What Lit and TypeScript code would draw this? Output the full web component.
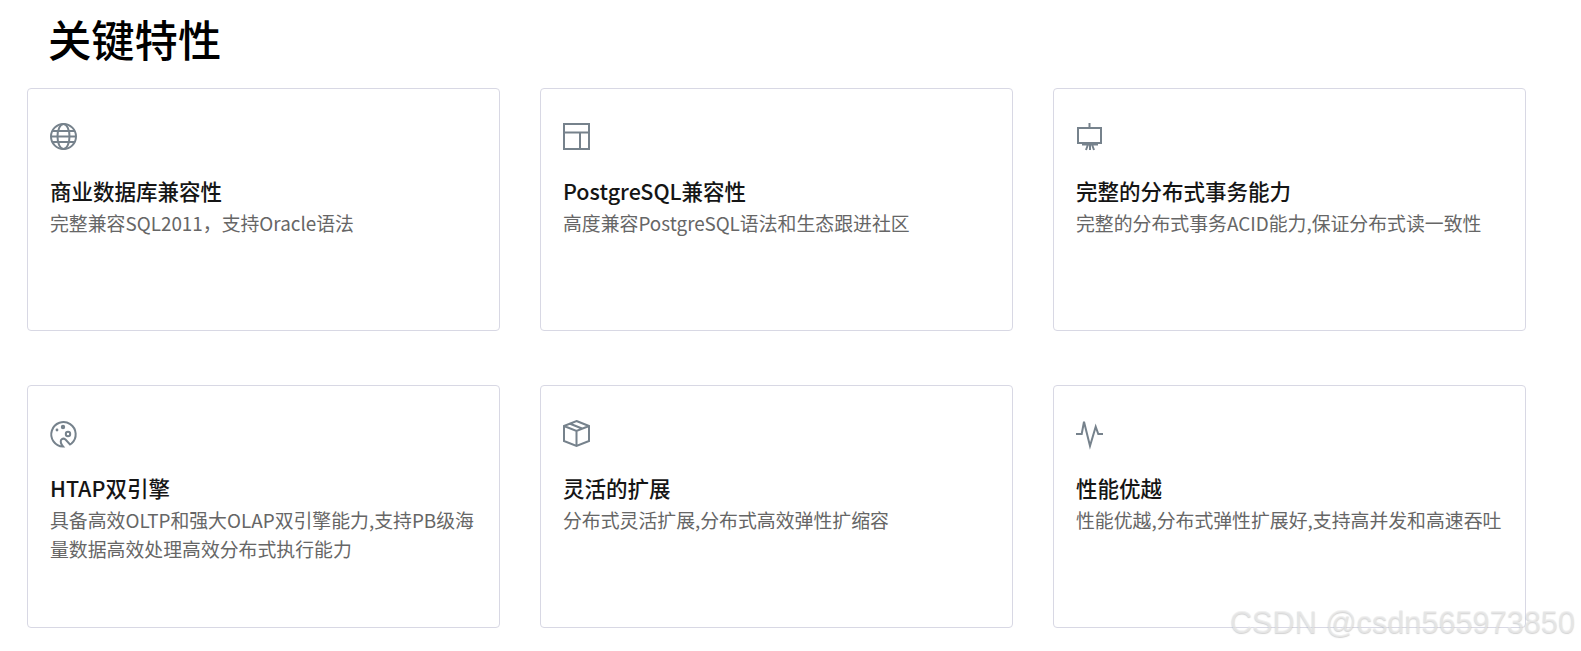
import { LitElement, html, css, svg } from "lit";
import { customElement } from "lit/decorators.js";

const icons = {
  globe: svg`<circle cx="13.5" cy="13.500" r="12.500"/><ellipse cx="13.500" cy="13.500" rx="6" ry="12.500"/><path d="M2.500 8h22M1 13.500h25M2.500 19h22"/>`,
  layout: svg`<path d="M1 1h25v25H1zM1 9.500h25M17 9.500V26"/>`,
  board: svg`<path d="M2 5h23v15H2zM13.500 0v5M6 21.500h16M10 27l2-5.500M14 27v-5.500M18 27l-2-5.500"/>`,
  palette: svg`<g transform="translate(0 1)"><path d="M13 25.500A12.200 12.200 0 1 1 21.500 22.500L20 23.500 15.500 18.500Q13 16.500 11 19 10 22 13 25.500z"/><circle cx="13" cy="6" r="2.200" class="fill"/><circle cx="7" cy="9" r="1.400" class="fill"/><circle cx="18" cy="13" r="2.200"/></g>`,
  box: svg`<g transform="translate(0 1)"><path d="M13.500 0L26 5v15L13.500 25 1 20V5zM1 5L13.500 10 26 5M13.500 10v15M6.500 2.500l12.500 5"/></g>`,
  pulse: svg`<g transform="translate(0 1)"><path d="M0 13h5.700L8 .7 14 25 19.700 5.700 22.300 13H27"/></g>`,
};

const cards = [
  { icon: icons.globe, title: "商业数据库兼容性", desc: "完整兼容SQL2011，支持Oracle语法" },
  { icon: icons.layout, title: "PostgreSQL兼容性", desc: "高度兼容PostgreSQL语法和生态跟进社区" },
  { icon: icons.board, title: "完整的分布式事务能力", desc: "完整的分布式事务ACID能力,保证分布式读一致性" },
  { icon: icons.palette, title: "HTAP双引擎", desc: "具备高效OLTP和强大OLAP双引擎能力,支持PB级海量数据高效处理高效分布式执行能力" },
  { icon: icons.box, title: "灵活的扩展", desc: "分布式灵活扩展,分布式高效弹性扩缩容" },
  { icon: icons.pulse, title: "性能优越", desc: "性能优越,分布式弹性扩展好,支持高并发和高速吞吐" },
];

@customElement("app-root")
export class AppRoot extends LitElement {
  static styles = css`
    :host {
      display: block;
      height: 651px;
      position: relative;
      overflow: hidden;
      background: #fff;
      font-family: "Noto Sans CJK SC", "Noto Sans", sans-serif;
    }
    .page {
      padding: 0 27px;
    }
    h1 {
      margin: 0;
      padding: 6px 0 0 21px;
      height: 80px;
      box-sizing: border-box;
      font-size: 43.300px;
      line-height: 64px;
      font-weight: 500;
      color: #000;
    }
    .grid {
      margin-top: 8px;
      display: grid;
      grid-template-columns: repeat(3, 473px);
      grid-auto-rows: 243px;
      column-gap: 40px;
      row-gap: 54px;
    }
    .card {
      box-sizing: border-box;
      border: 1px solid #d8d8e4;
      border-radius: 4px;
      padding: 34px 22px 0;
    }
    .icon {
      display: block;
      width: 27px;
      height: 27px;
      overflow: visible;
      fill: none;
      stroke: #76828c;
      stroke-width: 2;
    }
    .icon .fill {
      fill: #76828c;
      stroke: none;
    }
    h3 {
      margin: 26px 0 0;
      font-size: 21.500px;
      line-height: 30px;
      font-weight: 500;
      color: #151515;
    }
    p {
      margin: 2px 0 0;
      font-size: 18.870px;
      line-height: 29px;
      font-weight: 400;
      color: #666;
    }
    .mark {
      position: absolute;
      right: 6px;
      top: 605px;
      font-family: "Liberation Sans", sans-serif;
      font-size: 30.700px;
      line-height: 36px;
      color: rgba(236, 236, 236, 0.7);
      text-shadow: 0 1px 1px rgba(110, 110, 110, 0.3);
    }
  `;

  render() {
    return html`
      <div class="page">
        <h1>关键特性</h1>
        <div class="grid">
          ${cards.map(
            (c) => html`
              <div class="card">
                <svg class="icon" viewBox="0 0 27 27">${c.icon}</svg>
                <h3>${c.title}</h3>
                <p>${c.desc}</p>
              </div>
            `
          )}
        </div>
      </div>
      <div class="mark">CSDN @csdn565973850</div>
    `;
  }
}
